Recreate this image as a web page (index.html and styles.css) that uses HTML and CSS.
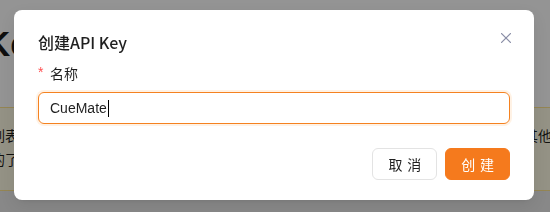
FILE: index.html
```html
<!DOCTYPE html>
<html lang="zh-CN">
<head>
<meta charset="utf-8">
<title>创建API Key</title>
<link rel="stylesheet" href="styles.css">
</head>
<body>
<div class="page">
  <div class="content">
    <h1 class="page-title">Keys</h1>
    <div class="alert">
      <div class="alert-line">
        <span>列表中展示当前账号下所有的密钥</span>
        <span class="alert-right">其他信息</span>
      </div>
      <div class="alert-line">
        <span>的了解更多</span>
      </div>
    </div>
  </div>
</div>

<div class="mask"></div>

<div class="modal" role="dialog">
  <button class="modal-close" aria-label="关闭">
    <svg viewBox="0 0 10 10" width="10" height="10">
      <path d="M0.6 0.6 L9.4 9.4 M9.4 0.6 L0.6 9.4" stroke="#8b8fa7" stroke-width="1.3" fill="none" stroke-linecap="round"/>
    </svg>
  </button>
  <div class="modal-title">创建API Key</div>
  <div class="form-item">
    <label class="form-label"><span class="required">*</span>名称</label>
    <div class="input">
      <span class="input-text">CueMate</span><span class="caret"></span>
    </div>
  </div>
  <div class="modal-footer">
    <button class="btn btn-default"><span>取消</span></button>
    <button class="btn btn-primary"><span>创建</span></button>
  </div>
</div>
</body>
</html>
```
FILE: styles.css
```css
* {
  box-sizing: border-box;
}

html, body {
  margin: 0;
  padding: 0;
  height: 100%;
  overflow: hidden;
}

body {
  background: #ebebeb;
  font-family: "Liberation Sans", "Noto Sans CJK SC", sans-serif;
  color: rgba(0, 0, 0, 0.88);
}

.content {
  background: #ffffff;
  padding-top: 24px;
  overflow: hidden;
}

.page-title {
  margin: 0 0 43px -15px;
  font-size: 35px;
  line-height: 40px;
  font-weight: 700;
  color: #1a1a1a;
}

.alert {
  margin-left: -24px;
  width: 620px;
  background: #fffbe6;
  border: 1px solid #ffe58f;
  padding: 15px 15px 19px 14px;
  font-size: 14px;
  line-height: 24px;
  font-family: "Noto Sans CJK SC", sans-serif;
  color: rgba(0, 0, 0, 0.88);
}

.alert-line {
  display: flex;
  white-space: nowrap;
}

.alert-right {
  margin-left: auto;
}

.mask {
  position: fixed;
  inset: 0;
  background: rgba(0, 0, 0, 0.42);
}

.modal {
  position: absolute;
  left: 14px;
  top: 10px;
  width: 520px;
  background: #ffffff;
  border-radius: 8px;
  padding: 20px 24px;
  box-shadow: 0 6px 16px rgba(0, 0, 0, 0.08), 0 3px 6px -4px rgba(0, 0, 0, 0.12);
}

.modal-close {
  position: absolute;
  top: 17px;
  right: 17px;
  width: 22px;
  height: 22px;
  padding: 0;
  border: 0;
  background: transparent;
  display: flex;
  align-items: center;
  justify-content: center;
}

.modal-title {
  font-size: 16px;
  line-height: 24px;
  font-weight: 500;
  color: rgba(0, 0, 0, 0.88);
  font-family: "Noto Sans CJK SC", sans-serif;
}

.form-item {
  margin-top: 8px;
}

.form-label {
  display: flex;
  align-items: center;
  font-size: 14px;
  line-height: 22px;
  height: 22px;
  margin-bottom: 8px;
  font-family: "Noto Sans CJK SC", sans-serif;
  color: rgba(0, 0, 0, 0.88);
}

.required {
  display: inline-block;
  width: 12px;
  color: #ff4d4f;
  font-family: "Liberation Sans", sans-serif;
  font-size: 14px;
  line-height: 1;
  position: relative;
  top: -1px;
}

.input {
  display: flex;
  align-items: center;
  height: 32px;
  padding: 4px 11px;
  border: 1px solid #f58220;
  border-radius: 6px;
  box-shadow: 0 0 0 2px rgba(255, 150, 40, 0.12);
  font-size: 14px;
  color: rgba(0, 0, 0, 0.88);
}

.caret {
  display: inline-block;
  width: 1px;
  height: 17px;
  background: #000;
  margin-left: 1px;
}

.modal-footer {
  margin-top: 24px;
  display: flex;
  justify-content: flex-end;
  gap: 8px;
}

.btn {
  flex: none;
  white-space: nowrap;
  height: 32px;
  padding: 4px 15px;
  border-radius: 6px;
  font-size: 14px;
  line-height: 22px;
  font-family: "Noto Sans CJK SC", sans-serif;
  cursor: pointer;
}

.btn > span {
  display: inline-block;
  letter-spacing: 0.34em;
  margin-right: -0.34em;
}

.btn-default {
  background: #ffffff;
  border: 1px solid #e3e3e3;
  color: rgba(0, 0, 0, 0.88);
}

.btn-primary {
  background: #f57a1d;
  border: 1px solid #f57a1d;
  color: #ffffff;
}
```
